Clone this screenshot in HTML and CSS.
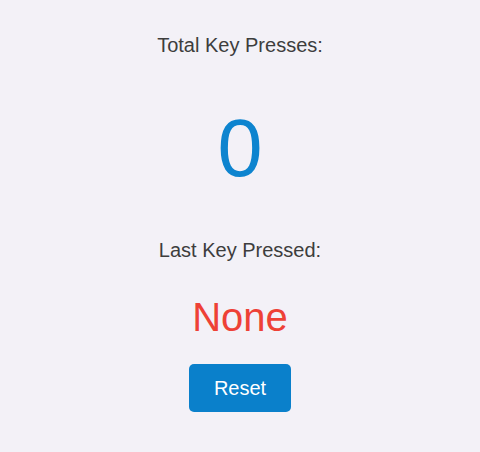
FILE: index.html
```html
<!DOCTYPE html>
<html lang="en">
<head>
<meta charset="utf-8">
<title>Key Press Counter</title>
<link rel="stylesheet" href="styles.css">
</head>
<body>
<main class="counter">
  <p class="label">Total Key Presses:</p>
  <p class="count">0</p>
  <p class="label label-last">Last Key Pressed:</p>
  <p class="last-key">None</p>
  <button class="reset" type="button">Reset</button>
</main>
</body>
</html>
```

FILE: styles.css
```css
html, body {
  margin: 0;
  padding: 0;
}

body {
  background: #f3f1f7;
  font-family: "Liberation Sans", Arial, sans-serif;
  color: #3d3d3d;
}

.counter {
  display: flex;
  flex-direction: column;
  align-items: center;
  padding-top: 34px;
}

.label {
  margin: 0;
  font-size: 20px;
  line-height: 23px;
}

.count {
  margin: 45px 0 0;
  font-size: 81px;
  line-height: 92px;
  color: #0d84cf;
}

.label-last {
  margin-top: 45px;
}

.last-key {
  margin: 32px 0 0;
  font-size: 40px;
  line-height: 46px;
  color: #ee4136;
}

.reset {
  margin-top: 24px;
  width: 102px;
  height: 48px;
  border: none;
  border-radius: 5px;
  background: #0a80cb;
  color: #ffffff;
  font-family: "Liberation Sans", Arial, sans-serif;
  font-size: 20px;
  cursor: pointer;
}
```
